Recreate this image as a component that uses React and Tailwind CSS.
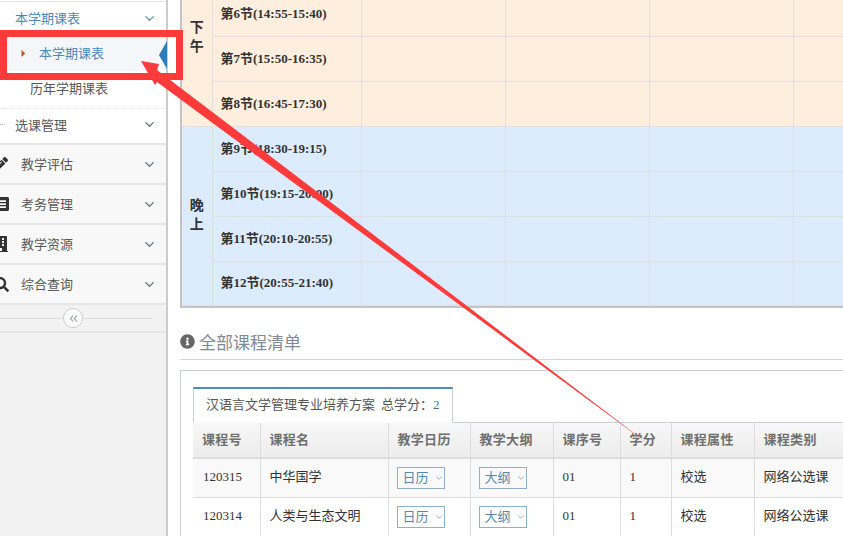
import { ChevronDown, ChevronsLeft } from 'lucide-react';
import { FaPencilAlt, FaListAlt, FaBuilding, FaSearch, FaInfoCircle, FaCaretRight } from 'react-icons/fa';

const cjk = "font-['Liberation_Serif','Noto_Sans_CJK_SC',serif]";

const menus = [
  { name: '教学评估', icon: <FaPencilAlt size={15} />, ml: '-ml-[7px]', gap: 'mr-[13px]' },
  { name: '考务管理', icon: <FaListAlt size={16} />, ml: '-ml-[7px]', gap: 'mr-[12px]' },
  { name: '教学资源', icon: <FaBuilding size={16} />, ml: '-ml-[7px]', gap: 'mr-[12px]' },
  { name: '综合查询', icon: <FaSearch size={15} />, ml: '-ml-[6px]', gap: 'mr-[12px]' },
];

const afternoon = [
  ['第6节', '(14:55-15:40)', 'h-[36px] pb-[8px]'],
  ['第7节', '(15:50-16:35)', 'h-[45px]'],
  ['第8节', '(16:45-17:30)', 'h-[45px]'],
];

const evening = [
  ['第9节', '(18:30-19:15)', 'h-[45px]'],
  ['第10节', '(19:15-20:00)', 'h-[45px]'],
  ['第11节', '(20:10-20:55)', 'h-[45px]'],
  ['第12节', '(20:55-21:40)', 'h-[44px]'],
];

const courseCols = ['课程号', '课程名', '教学日历', '教学大纲', '课序号', '学分', '课程属性', '课程类别'];
const courses = [
  { id: '120315', name: '中华国学', bg: 'bg-[#f9f9f9]' },
  { id: '120314', name: '人类与生态文明', bg: 'bg-white' },
];

function SelectBtn({ label }) {
  return (
    <div className="flex h-[22px] w-[48px] items-center gap-[5px] border border-[#8fb0cc] pl-[5px] text-[#5a87ad]">
      <span className="text-[13px] leading-none">{label}</span>
      <ChevronDown size={10} className="text-[#7d9cb8]" />
    </div>
  );
}

function ScheduleRows({ label, rows, bg }) {
  return rows.map((r, i) => (
    <tr key={r[0]} className={bg}>
      {i === 0 && (
        <td rowSpan={rows.length} className="border-r border-b border-[#dfdfdf] p-0 align-top">
          <div className={`flex flex-col items-center text-[14px] font-bold leading-[19px] text-[#333] ${label === '晚上' ? 'mt-[69px]' : 'mt-[18px]'}`}>
            <span>{label[0]}</span>
            <span>{label[1]}</span>
          </div>
        </td>
      )}
      <td className={`border-r border-b border-[#dfdfdf] p-0 pl-[8px] text-[13px] font-bold text-[#333] ${r[2]}`}>
        {r[0]}{r[1]}
      </td>
      {[0, 1, 2, 3].map(n => <td key={n} className="border-r border-b border-[#dfdfdf] p-0" />)}
    </tr>
  ));
}

export default function App() {
  return (
    <div className={`relative flex h-[536px] w-[843px] overflow-hidden bg-white ${cjk}`}>

      {/* sidebar */}
      <div className="flex w-[168px] shrink-0 flex-col border-r-2 border-[#cccccc] bg-[#f2f2f2] font-['Noto_Sans_CJK_SC',sans-serif] text-[13px] text-[#585858]">
        <div className="h-[2px] shrink-0 border-b border-[#e5e5e5] bg-white" />
        <div className="flex h-[33px] shrink-0 items-center justify-between bg-white pl-[15px] pr-[9px] text-[#4b88b8]">
          <span className="pb-[2px]">本学期课表</span>
          <ChevronDown size={15} className="text-[#5f8fb5]" />
        </div>
        <div className="flex h-[36px] shrink-0 items-center border-t border-dotted border-[#e4e4e4] bg-[#f4f6fa] pl-[18px] text-[#4b88b8]">
          <FaCaretRight size={11} className="mr-[10px] text-[#c8552f]" />
          <span className="pb-[2px]">本学期课表</span>
        </div>
        <div className="flex h-[37px] shrink-0 items-center bg-white pb-[4px] pl-[30px]">历年学期课表</div>
        <div className="flex h-[37px] shrink-0 items-center justify-between border-t border-b-2 border-dotted border-t-[#e4e4e4] border-b-[#e5e5e5] [border-bottom-style:solid] bg-white pb-[3px] pr-[9px]">
          <div className="flex items-center">
            <span className="mr-[10px] w-[5px] border-t border-dotted border-[#a9bccb]" />
            <span>选课管理</span>
          </div>
          <ChevronDown size={15} className="text-[#5c6f80]" />
        </div>
        {menus.map(m => (
          <div key={m.name} className="flex h-[40px] shrink-0 items-center justify-between border-b-2 border-[#e5e5e5] bg-[#f8f8f8] pr-[9px]">
            <div className="flex items-center">
              <span className={`text-[#333] ${m.ml} ${m.gap}`}>{m.icon}</span>
              <span>{m.name}</span>
            </div>
            <ChevronDown size={15} className="text-[#5c6f80]" />
          </div>
        ))}
        <div className="relative flex h-[28px] shrink-0 items-center justify-center border-b-2 border-[#e5e5e5]">
          <div className="absolute left-0 top-[13px] h-px w-[152px] bg-[#dddddd]" />
          <div className="relative mr-[20px] flex h-[20px] w-[20px] items-center justify-center rounded-full border border-[#cccccc] bg-white text-[#9aa7b5]">
            <ChevronsLeft size={13} />
          </div>
        </div>
      </div>

      {/* main */}
      <div className="ml-[12px] flex min-w-0 grow flex-col">
        <div className="w-[757px] shrink-0 border-l-2 border-b-2 border-[#c4c4c4]">
          <table className="w-[755px] table-fixed border-collapse">
            <colgroup>
              <col className="w-[30px]" />
              <col className="w-[149px]" />
              <col className="w-[144px]" />
              <col className="w-[144px]" />
              <col className="w-[144px]" />
              <col className="w-[144px]" />
            </colgroup>
            <tbody>
              <ScheduleRows label="下午" rows={afternoon} bg="bg-[#feeede]" />
              <ScheduleRows label="晚上" rows={evening} bg="bg-[#dcebfe]" />
            </tbody>
          </table>
        </div>

        <div className="mt-[26px] flex h-[26px] shrink-0 items-center gap-[4px] border-b border-[#d5d5d5] pb-[9px] font-['Noto_Sans_CJK_SC',sans-serif] text-[17px] text-[#7f8a94]">
          <FaInfoCircle size={15} className="text-[#666]" />
          <span>全部课程清单</span>
        </div>

        <div className="mt-[10px] w-[720px] shrink-0 border border-[#c5d0dc] pl-[12px] pt-[16px]">
          <div className="relative z-10 -mb-px flex h-[36px] w-[260px] items-center border-x border-b border-t-2 border-[#c5d0dc] border-t-[#4c8fbd] border-b-white bg-white pl-[12px] text-[13px] text-[#555]">
            <span>汉语言文学管理专业培养方案</span>
            <span className="ml-[6px]">总学分：<span className="text-[#4c6f94]">2</span></span>
          </div>
          <table className="w-[700px] table-fixed border-collapse border-t border-[#c5d0dc] text-[13px] text-[#333]">
            <colgroup>
              <col className="w-[67px]" />
              <col className="w-[128px]" />
              <col className="w-[82px]" />
              <col className="w-[83px]" />
              <col className="w-[67px]" />
              <col className="w-[51px]" />
              <col className="w-[83px]" />
              <col className="w-[139px]" />
            </colgroup>
            <thead>
              <tr className="h-[36px] bg-gradient-to-b from-[#f8f8f8] to-[#ececec]">
                {courseCols.map(c => (
                  <th key={c} className="border-r border-b-2 border-[#dddddd] p-0 pl-[9px] text-left text-[13px] font-bold tracking-[0.3px] text-[#707070]">{c}</th>
                ))}
              </tr>
            </thead>
            <tbody>
              {courses.map(c => (
                <tr key={c.id} className={`h-[39px] ${c.bg}`}>
                  <td className="border-r border-b border-[#dddddd] p-0 pb-[2px] pl-[10px]">{c.id}</td>
                  <td className="border-r border-b border-[#dddddd] p-0 pb-[2px] pl-[9px]">{c.name}</td>
                  <td className="border-r border-b border-[#dddddd] p-0 pl-[8px]"><SelectBtn label="日历" /></td>
                  <td className="border-r border-b border-[#dddddd] p-0 pl-[8px]"><SelectBtn label="大纲" /></td>
                  <td className="border-r border-b border-[#dddddd] p-0 pb-[2px] pl-[9px]">01</td>
                  <td className="border-r border-b border-[#dddddd] p-0 pb-[2px] pl-[9px]">1</td>
                  <td className="border-r border-b border-[#dddddd] p-0 pb-[2px] pl-[9px]">校选</td>
                  <td className="border-r border-b border-[#dddddd] p-0 pb-[2px] pl-[9px]">网络公选课</td>
                </tr>
              ))}
            </tbody>
          </table>
        </div>
      </div>

      {/* annotation over the page */}
      <svg className="pointer-events-none absolute left-0 top-0" width="843" height="536">
        <polygon points="159,55 167,41 167,69" fill="#2b7dbc" />
        <rect x="3.5" y="33.5" width="176" height="43" fill="none" stroke="#fe3a3a" strokeWidth="7" />
        <polygon points="141,61 159,64 157,70 651,446 157,82 155,85" fill="#fe3a3a" />
      </svg>
    </div>
  );
}
